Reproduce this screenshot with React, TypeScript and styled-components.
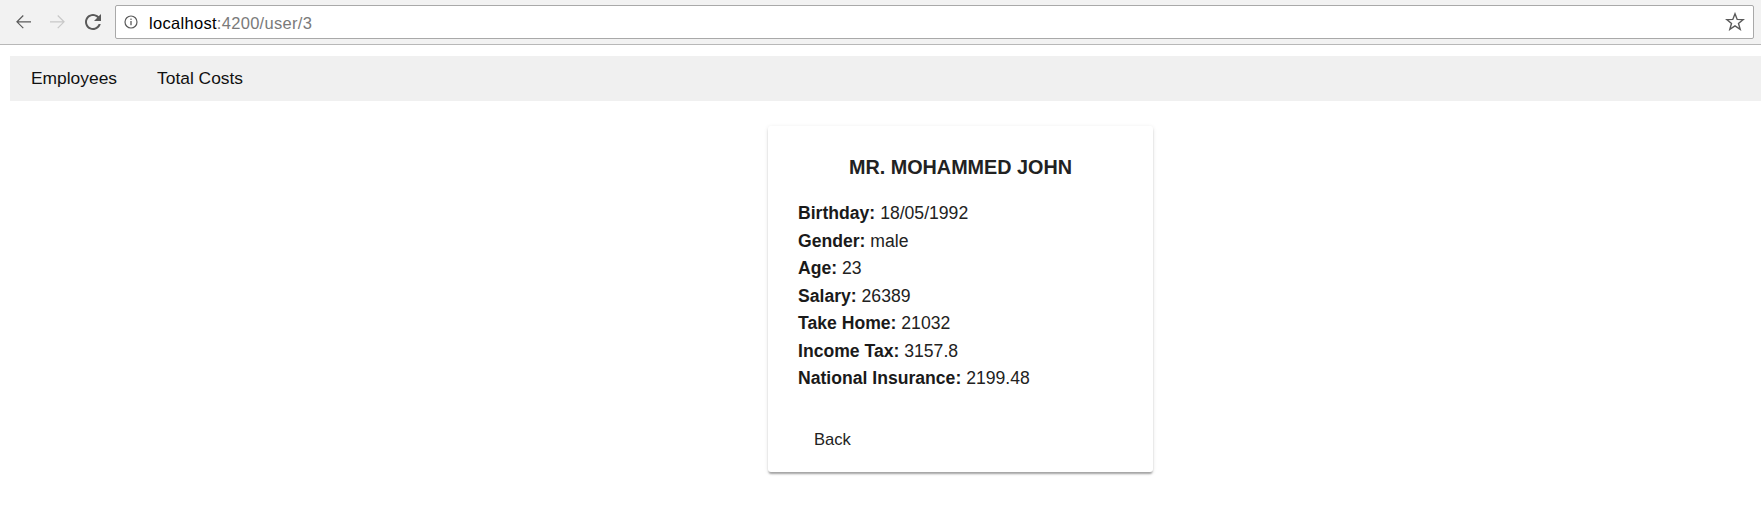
import React from "react";
import styled, { createGlobalStyle } from "styled-components";

const GlobalStyle = createGlobalStyle`
  html, body { margin: 0; padding: 0; background: #ffffff; }
  body { font-family: "Liberation Sans", Arial, sans-serif; color: #212121; }
  * { box-sizing: border-box; }
`;

const Screen = styled.div`
  width: 1761px;
  min-height: 516px;
  display: flex;
  flex-direction: column;
`;

const BrowserBar = styled.div`
  height: 45px;
  background: #f2f2f2;
  border-bottom: 1px solid #b8b8b8;
  display: flex;
  align-items: center;
  padding: 0 7px 0 11px;
  gap: 11px;
`;

const ToolIcon = styled.svg<{ $dim?: boolean }>`
  width: 24px;
  height: 24px;
  flex: none;
  fill: ${(p) => (p.$dim ? "#c8c8c8" : "#5a5a5a")};
`;

const Omnibox = styled.div`
  flex: 1;
  height: 34px;
  margin-left: -1px;
  background: #ffffff;
  border: 1px solid #a9a9a9;
  border-radius: 2px;
  display: flex;
  align-items: center;
  padding: 0 8px 0 8px;
`;

const InfoIcon = styled.svg`
  width: 14px;
  height: 14px;
  flex: none;
  margin-right: 11px;
`;

const Url = styled.span`
  flex: 1;
  font-family: "Liberation Sans", Arial, sans-serif;
  font-size: 16.5px;
  letter-spacing: 0.3px;
  color: #000;
  line-height: 20px;
  margin-top: 1px;
`;

const UrlRest = styled.span`
  color: #7a7a7a;
`;

const StarIcon = styled.svg`
  width: 20px;
  height: 20px;
  flex: none;
`;

const Page = styled.div`
  padding: 11px 0 0 10px;
  display: flex;
  flex-direction: column;
`;

const NavBar = styled.nav`
  height: 45px;
  background: #f0f0f0;
  display: flex;
  align-items: stretch;
  padding-left: 1px;
`;

const NavLink = styled.a`
  display: flex;
  align-items: center;
  padding: 0 20px;
  font-size: 17.4px;
  line-height: 45px;
  color: #111;
  text-decoration: none;
  cursor: pointer;
`;

const Main = styled.main`
  display: flex;
  justify-content: center;
  padding: 25px 0 0 150px;
`;

const Card = styled.section`
  width: 385px;
  background: #ffffff;
  border-radius: 3px;
  padding: 29px 30px 12px;
  box-shadow: 0 3px 2px -1px rgba(0, 0, 0, 0.22), 0 2px 2px 0 rgba(0, 0, 0, 0.12),
    0 1px 4px 0 rgba(0, 0, 0, 0.1);
  display: flex;
  flex-direction: column;
`;

const Title = styled.h2`
  margin: 0 0 21px;
  font-size: 19.8px;
  line-height: 24px;
  font-weight: 700;
  text-align: center;
  color: #222;
`;

const Details = styled.div`
  display: flex;
  flex-direction: column;
`;

const Row = styled.div`
  font-size: 17.6px;
  line-height: 27.5px;
  color: #222;
`;

const Label = styled.b`
  font-weight: 700;
  color: #1a1a1a;
`;

const BackButton = styled.button`
  align-self: flex-start;
  margin-top: 27px;
  height: 40px;
  padding: 0 16px;
  border: none;
  background: transparent;
  font-family: "Liberation Sans", Arial, sans-serif;
  font-size: 16.6px;
  line-height: 40px;
  color: #222;
  cursor: pointer;
  border-radius: 4px;
`;

const rows: [string, string][] = [
  ["Birthday:", "18/05/1992"],
  ["Gender:", "male"],
  ["Age:", "23"],
  ["Salary:", "26389"],
  ["Take Home:", "21032"],
  ["Income Tax:", "3157.8"],
  ["National Insurance:", "2199.48"],
];

export default function App() {
  return (
    <Screen>
      <GlobalStyle />
      <BrowserBar>
        <ToolIcon viewBox="0 0 24 24">
          <path d="M20 11.2H7.4l5.3-5.3-.85-.85L5.1 11.8l6.75 6.75.85-.85-5.3-5.3H20z" />
        </ToolIcon>
        <ToolIcon viewBox="0 0 24 24" $dim>
          <path d="M4 11.2h12.6l-5.3-5.3.85-.85 6.75 6.75-6.75 6.75-.85-.85 5.3-5.3H4z" />
        </ToolIcon>
        <ToolIcon viewBox="0 0 24 24">
          <path d="M17.65 6.35C16.2 4.9 14.21 4 12 4c-4.42 0-7.99 3.58-7.99 8s3.57 8 7.99 8c3.73 0 6.84-2.55 7.730-6h-2.08c-.82 2.33-3.04 4-5.650 4-3.31 0-6-2.69-6-6s2.69-6 6-6c1.66 0 3.14.69 4.22 1.78L13 11h7V4l-2.35 2.35z" />
        </ToolIcon>
        <Omnibox>
          <InfoIcon viewBox="0 0 14 14">
            <circle cx="7" cy="7" r="6" fill="none" stroke="#5a5a5a" strokeWidth="1.2" />
            <rect x="6.35" y="6" width="1.3" height="4.2" fill="#5a5a5a" />
            <rect x="6.35" y="3.6" width="1.3" height="1.3" fill="#5a5a5a" />
          </InfoIcon>
          <Url>
            localhost<UrlRest>:4200/user/3</UrlRest>
          </Url>
          <StarIcon viewBox="0 0 20 20">
            <polygon
              points="10,1.8 12.2,7.4 18.2,7.6 13.5,11.4 15.2,17.3 10,13.9 4.8,17.3 6.5,11.4 1.8,7.6 7.8,7.4"
              fill="none"
              stroke="#5a5a5a"
              strokeWidth="1.4"
              strokeLinejoin="miter"
            />
          </StarIcon>
        </Omnibox>
      </BrowserBar>
      <Page>
        <NavBar>
          <NavLink>Employees</NavLink>
          <NavLink>Total Costs</NavLink>
        </NavBar>
        <Main>
          <Card>
            <Title>MR. MOHAMMED JOHN</Title>
            <Details>
              {rows.map(([k, v]) => (
                <Row key={k}>
                  <Label>{k}</Label> {v}
                </Row>
              ))}
            </Details>
            <BackButton>Back</BackButton>
          </Card>
        </Main>
      </Page>
    </Screen>
  );
}
